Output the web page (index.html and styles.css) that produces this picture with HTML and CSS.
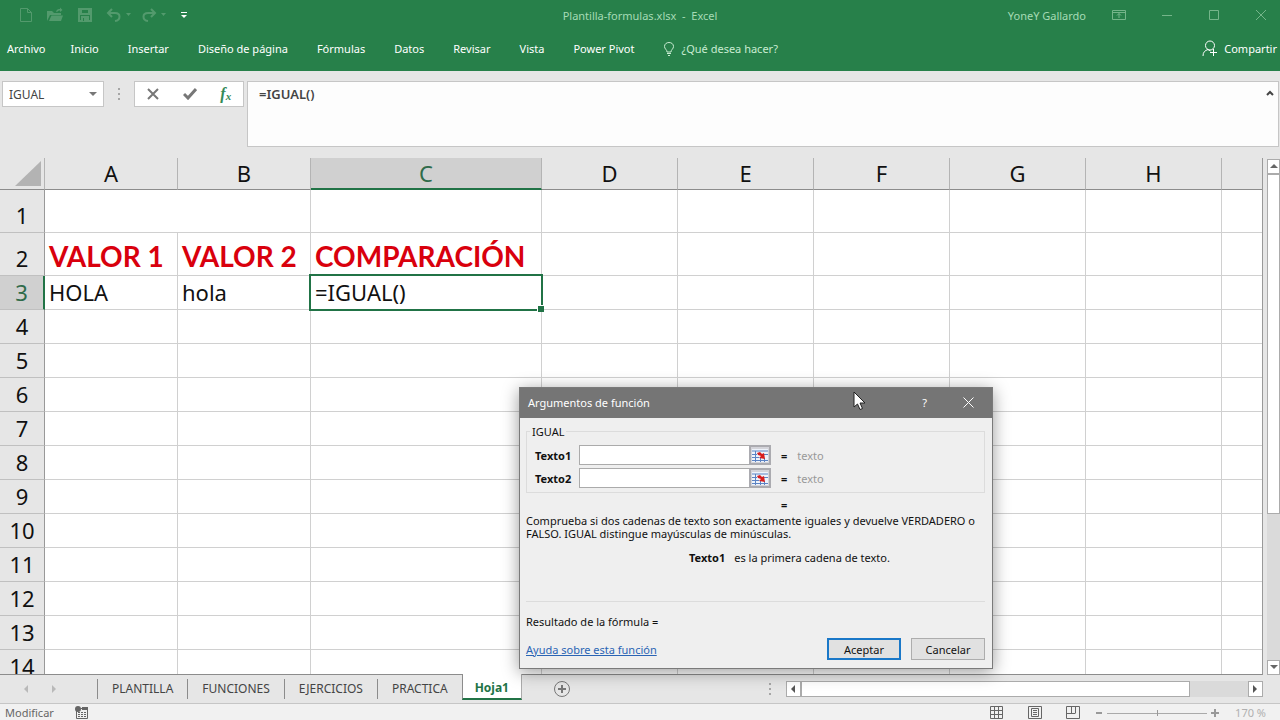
FILE: index.html
```html
<!DOCTYPE html>
<html lang="es">
<head>
    <meta charset="UTF-8">
    <title>Plantilla-formulas.xlsx - Excel</title>
    <link rel="stylesheet" href="styles.css">
</head>
<body>
    <header class="top">
        <div class="titlebar">
            <div class="quick">
                <button type="button" aria-label="Nuevo"><svg width="14" height="16" viewBox="0 0 14 16"><path d="M1.500 1.500H8.500L12.500 5.500V14.500H1.500ZM8.500 1.500V5.500H12.500"/></svg></button>
                <button type="button" aria-label="Abrir"><svg width="18" height="16" viewBox="0 0 18 16"><path class="fill" d="M1 14V4H6L8 6H15V8H4L2 12ZM3 14L5.500 8.500H17L15 14ZM10 4.500C11 2 13 2 14 2V0.500L16.500 3L14 5V3.500C13 3.500 12 3.500 11 5Z"/></svg></button>
                <button type="button" aria-label="Guardar"><svg width="16" height="16" viewBox="0 0 16 16"><path class="bold" d="M2 2H14V14H2ZM4 2V7H12V2"/><path class="fill" d="M4 9H12V14H4Z"/><path class="cut" d="M6.500 11V14"/></svg></button>
                <button type="button" aria-label="Deshacer"><svg width="26" height="16" viewBox="0 0 26 16"><path class="bold" d="M6 2L2 6L6 10M2 6H9C15 6 15 13 9 14"/><path class="fill" d="M20 6H25L22.500 9Z"/></svg></button>
                <button type="button" class="redo" aria-label="Rehacer"><svg width="26" height="16" viewBox="0 0 26 16"><path class="bold" d="M10 2L14 6L10 10M14 6H7C1 6 1 13 7 14"/><path class="fill" d="M20 6H25L22.500 9Z"/></svg></button>
                <button type="button" class="more" aria-label="Personalizar"><svg width="8" height="16" viewBox="0 0 8 16"><path d="M1 5.500H7"/><path class="fill" d="M1 8H7L4 11Z"/></svg></button>
            </div>
            <h1>Plantilla-formulas.xlsx &nbsp;-&nbsp; Excel</h1>
            <div class="window">
                <span>YoneY Gallardo</span>
                <button type="button" aria-label="Opciones de la cinta"><svg width="14" height="12" viewBox="0 0 14 12"><path d="M0.500 1.500H13.500V10.500H0.500ZM0.500 3.500H13.500M7 9V4.500M5 6.500L7 4.500L9 6.500"/></svg></button>
                <button type="button" aria-label="Minimizar"><svg width="12" height="12" viewBox="0 0 12 12"><path d="M1 6.500H11"/></svg></button>
                <button type="button" aria-label="Maximizar"><svg width="12" height="12" viewBox="0 0 12 12"><path d="M1.500 1.500H10.500V10.500H1.500Z"/></svg></button>
                <button type="button" aria-label="Cerrar"><svg width="12" height="12" viewBox="0 0 12 12"><path d="M1 1L11 11M11 1L1 11"/></svg></button>
            </div>
        </div>
        <nav class="menu">
            <a href="#" class="file">Archivo</a>
            <a href="#">Inicio</a>
            <a href="#">Insertar</a>
            <a href="#">Diseño de página</a>
            <a href="#">Fórmulas</a>
            <a href="#">Datos</a>
            <a href="#">Revisar</a>
            <a href="#">Vista</a>
            <a href="#">Power Pivot</a>
            <a href="#" class="tell"><svg width="12" height="16" viewBox="0 0 12 16"><path d="M4 11C4 8.500 1.500 8 1.500 5.500C1.500 3 3.500 1.500 6 1.500S10.500 3 10.500 5.500C10.500 8 8 8.500 8 11ZM4 12.500H8M5 14.500H7"/></svg>¿Qué desea hacer?</a>
            <a href="#" class="share"><svg width="16" height="17" viewBox="0 0 16 17"><circle cx="8" cy="5.500" r="4.500"/><path d="M1 16C1 12 3 10.500 6 9.500L8.500 11M8 12.500H15M11.500 9V16"/></svg>Compartir</a>
        </nav>
    </header>

    <div class="formula">
        <div class="namebox">
            <input type="text" value="IGUAL" aria-label="Cuadro de nombres">
            <svg width="8" height="5" viewBox="0 0 8 5"><path d="M0 0H8L4 4Z"/></svg>
        </div>
        <i class="dots"></i>
        <div class="fx">
            <button type="button" aria-label="Cancelar entrada"><svg width="12" height="12" viewBox="0 0 12 12"><path d="M1 1L11 11M11 1L1 11"/></svg></button>
            <button type="button" aria-label="Introducir"><svg width="14" height="12" viewBox="0 0 14 12"><path class="check" d="M1 6L5 10L13 1"/></svg></button>
            <button type="button" class="fn" aria-label="Insertar función">f<small>x</small></button>
        </div>
        <div class="bar">
            <input type="text" value="=IGUAL()" aria-label="Barra de fórmulas">
            <button type="button" aria-label="Contraer"><svg width="8" height="6" viewBox="0 0 8 6"><path d="M1 5L4 2L7 5"/></svg></button>
        </div>
    </div>

    <main class="sheet">
        <div class="cells">
            <table>
                <colgroup><col class="c-num"><col class="c-ab"><col class="c-ab"><col class="c-c"><col class="c-std"><col class="c-std"><col class="c-std"><col class="c-std"><col class="c-std"><col></colgroup>
                <thead>
                    <tr><th class="corner"><svg width="26" height="25" viewBox="0 0 26 25"><path d="M26 0V25H0Z"/></svg></th><th>A</th><th>B</th><th class="on">C</th><th>D</th><th>E</th><th>F</th><th>G</th><th>H</th><th></th></tr>
                </thead>
                <tbody>
                    <tr class="tall"><th>1</th><td colspan="2"></td><td></td><td></td><td></td><td></td><td></td><td></td><td></td></tr>
                    <tr class="tall head"><th>2</th><td>VALOR 1</td><td>VALOR 2</td><td>COMPARACIÓN</td><td></td><td></td><td></td><td></td><td></td><td></td></tr>
                    <tr><th class="on">3</th><td>HOLA</td><td>hola</td><td class="active">=IGUAL()</td><td></td><td></td><td></td><td></td><td></td><td></td></tr>
                    <tr><th>4</th><td></td><td></td><td></td><td></td><td></td><td></td><td></td><td></td><td></td></tr>
                    <tr><th>5</th><td></td><td></td><td></td><td></td><td></td><td></td><td></td><td></td><td></td></tr>
                    <tr><th>6</th><td></td><td></td><td></td><td></td><td></td><td></td><td></td><td></td><td></td></tr>
                    <tr><th>7</th><td></td><td></td><td></td><td></td><td></td><td></td><td></td><td></td><td></td></tr>
                    <tr><th>8</th><td></td><td></td><td></td><td></td><td></td><td></td><td></td><td></td><td></td></tr>
                    <tr><th>9</th><td></td><td></td><td></td><td></td><td></td><td></td><td></td><td></td><td></td></tr>
                    <tr><th>10</th><td></td><td></td><td></td><td></td><td></td><td></td><td></td><td></td><td></td></tr>
                    <tr><th>11</th><td></td><td></td><td></td><td></td><td></td><td></td><td></td><td></td><td></td></tr>
                    <tr><th>12</th><td></td><td></td><td></td><td></td><td></td><td></td><td></td><td></td><td></td></tr>
                    <tr><th>13</th><td></td><td></td><td></td><td></td><td></td><td></td><td></td><td></td><td></td></tr>
                    <tr><th>14</th><td></td><td></td><td></td><td></td><td></td><td></td><td></td><td></td><td></td></tr>
                </tbody>
            </table>
        </div>
        <div class="vscroll">
            <button type="button" aria-label="Subir"><svg width="8" height="5" viewBox="0 0 8 5"><path d="M0 4H8L4 0Z"/></svg></button>
            <div class="track"><div class="thumb"></div></div>
            <button type="button" aria-label="Bajar"><svg width="8" height="5" viewBox="0 0 8 5"><path d="M0 0H8L4 4Z"/></svg></button>
        </div>
    </main>

    <div class="tabs">
        <div class="arrows">
            <button type="button" aria-label="Anterior"><svg width="5" height="8" viewBox="0 0 5 8"><path d="M4 0V8L0 4Z"/></svg></button>
            <button type="button" aria-label="Siguiente"><svg width="5" height="8" viewBox="0 0 5 8"><path d="M0 0V8L4 4Z"/></svg></button>
        </div>
        <a href="#">PLANTILLA</a>
        <a href="#">FUNCIONES</a>
        <a href="#">EJERCICIOS</a>
        <a href="#">PRACTICA</a>
        <a href="#" class="current">Hoja1</a>
        <button type="button" class="add" aria-label="Hoja nueva"><svg width="16" height="16" viewBox="0 0 16 16"><circle cx="8" cy="8" r="7.500"/><path d="M4 8H12M8 4V12"/></svg></button>
        <i class="dots"></i>
        <div class="hscroll">
            <button type="button" aria-label="Izquierda"><svg width="5" height="8" viewBox="0 0 5 8"><path d="M4 0V8L0 4Z"/></svg></button>
            <div class="track"><div class="thumb"></div></div>
            <button type="button" aria-label="Derecha"><svg width="5" height="8" viewBox="0 0 5 8"><path d="M0 0V8L4 4Z"/></svg></button>
        </div>
    </div>

    <footer class="status">
        <span>Modificar</span>
        <svg class="macro" width="14" height="14" viewBox="0 0 14 14"><path d="M1.500 5V12.500H12.500V2.500H6M3 6.500H5M6 6.500H8M9 6.500H11M3 8.500H5M6 8.500H8M9 8.500H11M3 10.500H5M6 10.500H8M9 10.500H11"/><path class="fill" d="M7 1H13V4H7Z"/><circle class="fill" cx="3" cy="3" r="3"/></svg>
        <div class="views">
            <button type="button" aria-label="Normal"><svg width="14" height="14" viewBox="0 0 14 14"><path d="M0.500 0.500H12.500V12.500H0.500ZM4.500 0.500V12.500M8.500 0.500V12.500M0.500 4.500H12.500M0.500 8.500H12.500"/></svg></button>
            <button type="button" aria-label="Diseño"><svg width="14" height="14" viewBox="0 0 14 14"><path d="M0.500 0.500H13.500V12.500H0.500ZM3.500 2.500H10.500V10.500H3.500ZM5 4.500H9M5 6.500H9M5 8.500H9"/></svg></button>
            <button type="button" aria-label="Saltos de página"><svg width="14" height="14" viewBox="0 0 14 14"><path d="M0.500 0.500H13.500V12.500H0.500ZM5.500 0.500V7M9.500 0.500V7M0.500 7.500H9.500"/></svg></button>
        </div>
        <div class="zoom">
            <button type="button" aria-label="Alejar"><svg width="8" height="8" viewBox="0 0 8 8"><path d="M1 4H7"/></svg></button>
            <input type="range" min="10" max="330" value="170" aria-label="Zoom">
            <button type="button" aria-label="Acercar"><svg width="8" height="8" viewBox="0 0 8 8"><path d="M0 4H8M4 0V8"/></svg></button>
            <span>170 %</span>
        </div>
    </footer>

    <section class="dialog" role="dialog" aria-label="Argumentos de función">
        <div class="caption">
            <h2>Argumentos de función</h2>
            <button type="button" aria-label="Ayuda">?</button>
            <button type="button" aria-label="Cerrar"><svg width="11" height="11" viewBox="0 0 11 11"><path d="M0.500 0.500L10.500 10.500M10.500 0.500L0.500 10.500"/></svg></button>
            <svg class="cursor" width="13" height="20" viewBox="0 0 13 20"><path d="M1 1V16L4.500 13L7 18.500L9.500 17.500L7 12H12Z"/></svg>
        </div>
        <div class="content">
            <fieldset>
                <legend>IGUAL</legend>
                <div class="arg">
                    <label for="t1">Texto1</label>
                    <input type="text" id="t1">
                    <button type="button" aria-label="Seleccionar rango"><svg width="16" height="13" viewBox="0 0 16 13"><path class="paper" d="M0 0H16V13H0Z"/><path class="grid" d="M0 2H16M0 5.500H5M12 5.500H16M0 8.500H7M0 11.500H16M3.500 2V13M8.500 9V13M12.500 9V13"/><path class="arrow" d="M5 4L8 3L10 5L12 4L13 10L7 9L9 7L6 6Z"/></svg></button>
                    <span class="eq">=</span><span class="hint">texto</span>
                </div>
                <div class="arg">
                    <label for="t2">Texto2</label>
                    <input type="text" id="t2">
                    <button type="button" aria-label="Seleccionar rango"><svg width="16" height="13" viewBox="0 0 16 13"><path class="paper" d="M0 0H16V13H0Z"/><path class="grid" d="M0 2H16M0 5.500H5M12 5.500H16M0 8.500H7M0 11.500H16M3.500 2V13M8.500 9V13M12.500 9V13"/><path class="arrow" d="M5 4L8 3L10 5L12 4L13 10L7 9L9 7L6 6Z"/></svg></button>
                    <span class="eq">=</span><span class="hint">texto</span>
                </div>
            </fieldset>
            <p class="result">=</p>
            <p>Comprueba si dos cadenas de texto son exactamente iguales y devuelve VERDADERO o FALSO. IGUAL distingue mayúsculas de minúsculas.</p>
            <p class="detail"><b>Texto1</b><span>es la primera cadena de texto.</span></p>
            <p class="total">Resultado de la fórmula =</p>
            <div class="actions">
                <a href="#">Ayuda sobre esta función</a>
                <button type="button" class="ok">Aceptar</button>
                <button type="button">Cancelar</button>
            </div>
        </div>
    </section>
</body>
</html>
```
FILE: styles.css
```css
*{
    margin: 0;
    padding: 0;
    box-sizing: border-box;
}
body{
    display: flex;
    flex-direction: column;
    height: 100vh;
    overflow: hidden;
    background: #e6e6e6;
    font-family: "Noto Sans", "Open Sans", sans-serif;
    font-size: 11px;
    color: #444;
}
a{
    color: inherit;
    text-decoration: none;
}
button{
    display: flex;
    align-items: center;
    justify-content: center;
    border: 0;
    background: none;
    font: inherit;
    color: inherit;
}
input{
    min-width: 0;
    border: 0;
    background: none;
    font: inherit;
    color: inherit;
}
svg{
    display: block;
    flex: none;
    fill: none;
    stroke: currentColor;
}
svg .fill{
    fill: currentColor;
    stroke: none;
}

/* barra verde */
.top{
    flex: none;
    height: 71px;
    background: #27804a;
    color: #fff;
}
.titlebar{
    display: grid;
    grid-template-columns: 1fr auto 1fr;
    align-items: center;
    height: 30px;
    color: #a5dbb5;
}
.titlebar h1{
    font-size: 11px;
    font-weight: 400;
}
.quick{
    display: flex;
    gap: 13px;
    padding-left: 19px;
    color: #539a6d;
}
.quick .bold{
    stroke-width: 2;
}
.quick .cut{
    stroke: #27804a;
}
.quick .redo{
    margin-left: -4px;
}
.quick .more{
    color: #fff;
}
.window{
    display: flex;
    align-items: center;
    justify-content: flex-end;
    padding-right: 13px;
}
.window button{
    margin-left: 35px;
    color: #75b58a;
}
.window span{
    margin-right: -9px;
}
.menu{
    display: flex;
    align-items: center;
    gap: 29px;
    height: 37px;
    padding: 0 3px 0 7px;
}
.menu .file{
    margin-right: -4px;
}
.tell,
.share{
    display: flex;
    align-items: center;
    gap: 6px;
}
.tell{
    color: #c9ecd2;
}
.share{
    margin-left: auto;
}

/* barra de formulas */
.formula{
    display: flex;
    flex: none;
    align-items: flex-start;
    height: 87px;
    padding: 10px 1px 0 2px;
}
.namebox{
    display: flex;
    align-items: center;
    width: 102px;
    height: 26px;
    padding: 0 6px;
    border: 1px solid #c6c6c6;
    background: #fff;
    font-size: 12px;
}
.namebox input{
    flex: 1;
}
.namebox svg,
.vscroll svg,
.hscroll svg,
.arrows svg{
    fill: currentColor;
    stroke: none;
}
.namebox svg{
    color: #777;
}
.dots{
    width: 2px;
    height: 12px;
    background: repeating-linear-gradient(#a6a6a6 0 2px, transparent 2px 5px);
}
.formula .dots{
    margin: 7px 14px;
}
.fx{
    display: flex;
    align-items: center;
    justify-content: space-around;
    width: 110px;
    height: 26px;
    border: 1px solid #c6c6c6;
    background: #fff;
    color: #777;
}
.fx svg{
    stroke-width: 2;
}
.fx .check{
    stroke-width: 3;
}
.fx .fn{
    font: italic bold 16px/20px "Liberation Serif", serif;
    color: #358a57;
}
.fn small{
    padding-top: 4px;
    font-size: 11px;
}
.bar{
    display: flex;
    flex: 1;
    align-items: flex-start;
    height: 66px;
    margin-left: 3px;
    padding: 0 4px 0 11px;
    border: 1px solid #c6c6c6;
    background: #fdfdfd;
}
.bar input{
    flex: 1;
    height: 24px;
    font-size: 13px;
    font-weight: 600;
}
.bar button{
    height: 22px;
}
.bar svg{
    stroke-width: 2;
}

/* hoja */
.sheet{
    display: flex;
    flex: 1;
    min-height: 0;
}
.cells{
    flex: 1;
    overflow: hidden;
    border-right: 1px solid #999;
    border-bottom: 1px solid #8c8c8c;
    background: #fff;
}
table{
    width: 100%;
    border-collapse: separate;
    border-spacing: 0;
    table-layout: fixed;
    font-size: 22px;
    line-height: 33px;
    color: #111;
}
.c-num{
    width: 45px;
}
.c-ab{
    width: 133px;
}
.c-c{
    width: 231px;
}
.c-std{
    width: 136px;
}
th{
    border-right: 1px solid #999;
    border-bottom: 1px solid #c0c0c0;
    background: #e6e6e6;
    font-weight: 400;
    vertical-align: bottom;
}
thead th{
    height: 32px;
    border-right-color: #b4b4b4;
    border-bottom-color: #8c8c8c;
    line-height: 31px;
}
thead .on{
    border-bottom: 2px solid #217346;
    line-height: 30px;
}
tbody .on{
    border-right: 2px solid #217346;
}
.on{
    background: #d0d0d0;
    color: #2f6b4a;
}
.corner svg{
    margin: 0 3px 3px auto;
    fill: #b3b3b3;
    stroke: none;
}
td{
    height: 34px;
    padding: 0 4px;
    border-right: 1px solid #d0d0d0;
    border-bottom: 1px solid #d0d0d0;
    vertical-align: bottom;
    white-space: nowrap;
}
td:last-child,
th:last-child{
    border-right: 0;
}
.tall td{
    height: 43px;
}
.head td{
    font-family: Lato, sans-serif;
    font-size: 28px;
    font-weight: 700;
    line-height: 38px;
    color: #d9000d;
}
.active{
    position: relative;
}
.active::before{
    content: "";
    position: absolute;
    inset: -2px;
    border: 2px solid #217346;
}
.active::after{
    content: "";
    position: absolute;
    right: -3px;
    bottom: -3px;
    width: 6px;
    height: 6px;
    border: solid #fff;
    border-width: 1px 0 0 1px;
    background: #217346;
}

/* barras de desplazamiento */
.vscroll{
    display: flex;
    flex-direction: column;
    width: 13px;
    margin-left: 4px;
    padding-top: 1px;
    color: #666;
}
.vscroll button{
    height: 15px;
    border: 1px solid #ababab;
    background: #fff;
}
.track{
    flex: 1;
    background: #dadada;
}
.vscroll .thumb{
    height: 70%;
    border: 1px solid #ababab;
    background: #fff;
}
.hscroll{
    display: flex;
    width: 477px;
    height: 16px;
    margin-left: 15px;
    color: #555;
}
.hscroll button{
    width: 15px;
    border: 1px solid #ababab;
    background: #fff;
}
.hscroll .thumb{
    width: 87%;
    height: 100%;
    border: 1px solid #ababab;
    background: #fff;
}

/* pestañas */
.tabs{
    display: flex;
    flex: none;
    align-items: center;
    height: 28px;
    padding-right: 17px;
    font-size: 12px;
}
.arrows{
    display: flex;
    gap: 23px;
    width: 97px;
    padding-left: 24px;
    color: #b9b9b9;
}
.tabs a{
    padding: 0 14px;
    border-left: 1px solid #8c8c8c;
    line-height: 20px;
}
.tabs .current{
    align-self: flex-start;
    height: 26px;
    margin-top: -1px;
    padding: 0 12px;
    border-right: 1px solid #ababab;
    border-bottom: 2px solid #217346;
    background: #fff;
    font-weight: 700;
    line-height: 28px;
    color: #217346;
}
.add{
    margin-left: 32px;
    color: #777;
}
.add path{
    stroke-width: 2;
}
.tabs .dots{
    margin-left: auto;
}

/* barra de estado */
.status{
    display: flex;
    flex: none;
    align-items: flex-start;
    height: 17px;
    padding: 2px 14px 0 5px;
    border-top: 1px solid #c6c6c6;
    background: #f1f1f1;
    line-height: 14px;
    color: #666;
}
.macro{
    margin-left: 21px;
}
.views{
    display: flex;
    gap: 24px;
    margin-left: auto;
}
.zoom{
    display: flex;
    align-items: center;
    gap: 4px;
    margin-left: 15px;
    color: #999;
}
.zoom svg{
    stroke-width: 2;
}
.zoom input{
    width: 100px;
    height: 14px;
    appearance: none;
    background: linear-gradient(#aaa, #aaa) center / 100% 1px no-repeat;
}
.zoom input::-webkit-slider-thumb{
    appearance: none;
    width: 1px;
    height: 6px;
    background: #999;
}
.zoom span{
    margin-left: 12px;
    color: #b0b0b0;
}

/* cuadro de dialogo */
.dialog{
    position: absolute;
    top: 387px;
    left: 519px;
    width: 474px;
    border: 1px solid #7a7a7a;
    background: #efefef;
    box-shadow: 0 3px 16px rgba(0, 0, 0, .4);
    line-height: 13px;
    color: #111;
}
.caption{
    display: flex;
    align-items: center;
    height: 30px;
    padding: 0 18px 2px 8px;
    background: #757575;
    color: #fff;
}
.caption h2{
    flex: 1;
    font-size: 11px;
    font-weight: 400;
}
.caption button{
    margin-left: 36px;
}
.cursor{
    position: absolute;
    top: 3px;
    left: 333px;
    fill: #fff;
    stroke: #222;
}
.content{
    padding: 7px 7px 8px 6px;
}
fieldset{
    padding: 7px 0 1px 8px;
    border: 1px solid #dcdcdc;
}
legend{
    margin-left: -5px;
    padding: 0 2px;
}
.arg{
    display: flex;
    align-items: center;
    height: 20px;
    margin-bottom: 3px;
}
.arg label{
    width: 44px;
    font-weight: 700;
}
.arg input{
    width: 171px;
    height: 20px;
    border: 1px solid #ababab;
    background: #fff;
}
.arg button{
    width: 22px;
    height: 20px;
    margin-left: -1px;
    border: 2px solid #ababb0;
    background: #d4d4da;
}
.paper{
    fill: #eef3fb;
    stroke: none;
}
.grid{
    stroke: #5c84c4;
}
.arrow{
    fill: #d81e1e;
    stroke: none;
}
.eq{
    margin-left: 10px;
    font-weight: 700;
}
.hint{
    margin-left: 10px;
    color: #999;
}
.result{
    padding: 5px 0 3px 255px;
    font-weight: 700;
}
.detail{
    display: flex;
    gap: 9px;
    height: 62px;
    margin-bottom: 13px;
    padding: 11px 0 0 163px;
    border-bottom: 1px solid #dcdcdc;
}
.actions{
    display: flex;
    align-items: center;
    gap: 10px;
    margin-top: 10px;
}
.actions a{
    flex: 1;
    text-decoration: underline;
    color: #2a64b4;
}
.actions button{
    width: 74px;
    height: 22px;
    border: 1px solid #adadad;
    background: #e1e1e1;
}
.actions .ok{
    border: 2px solid #1a78c8;
}
```
